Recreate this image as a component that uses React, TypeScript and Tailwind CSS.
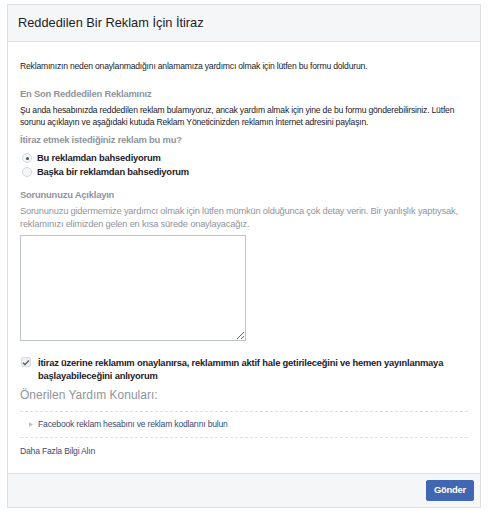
import React, { useState } from 'react';

const font = "font-['Liberation_Sans','Helvetica',Arial,sans-serif]";

export default function App() {
    const [choice, setChoice] = useState<'this' | 'other'>('this');
    const [agreed, setAgreed] = useState(true);

    return (
        <div className={`w-[491px] h-[516px] bg-white pt-[4px] pl-[7px] ${font}`}>
            <div className="w-[474px] border border-[#dddfe2] flex flex-col">
                {/* Header */}
                <div className="h-[37px] bg-[#f5f6f7] border-b border-[#dddfe2] flex items-center pl-[10px]">
                    <h2 className="text-[12.8px] text-[#1d2129]">Reddedilen Bir Reklam İçin İtiraz</h2>
                </div>

                {/* Body */}
                <div className="px-[12px] pt-[18px] h-[431px] tracking-[-0.2px]">
                    <p className="text-[8.6px] leading-[12px] text-[#1d2129]">
                        Reklamınızın neden onaylanmadığını anlamamıza yardımcı olmak için lütfen bu formu doldurun.
                    </p>

                    <div className="mt-[16px] text-[9.4px] leading-[12px] font-bold text-[#90949c]">En Son Reddedilen Reklamınız</div>
                    <p className="mt-[4px] text-[8.6px] leading-[12px] text-[#1d2129]">
                        Şu anda hesabınızda reddedilen reklam bulamıyoruz, ancak yardım almak için yine de bu formu gönderebilirsiniz. Lütfen sorunu açıklayın ve aşağıdaki kutuda Reklam Yöneticinizden reklamın İnternet adresini paylaşın.
                    </p>

                    <div className="mt-[6px] text-[9.4px] leading-[12px] font-bold text-[#90949c]">İtiraz etmek istediğiniz reklam bu mu?</div>
                    <div className="mt-[5px] flex flex-col">
                        {[
                            { id: 'this' as const, label: 'Bu reklamdan bahsediyorum' },
                            { id: 'other' as const, label: 'Başka bir reklamdan bahsediyorum' },
                        ].map((opt) => (
                            <label
                                key={opt.id}
                                onClick={() => setChoice(opt.id)}
                                className="flex items-center gap-[5px] h-[14px] pl-[2px] cursor-pointer"
                            >
                                <span className="w-[10px] h-[10px] rounded-full border border-[#d5d8de] bg-[#f5f6f7] flex items-center justify-center">
                                    {choice === opt.id && <span className="w-[3px] h-[3px] rounded-full bg-[#4b4f56]" />}
                                </span>
                                <span className="text-[9.4px] font-bold text-[#1d2129]">{opt.label}</span>
                            </label>
                        ))}
                    </div>

                    <div className="mt-[10px] text-[9.4px] leading-[12px] font-bold text-[#90949c]">Sorununuzu Açıklayın</div>
                    <p className="mt-[4px] text-[9.3px] leading-[13px] text-[#90949c]">
                        Sorununuzu gidermemize yardımcı olmak için lütfen mümkün olduğunca çok detay verin. Bir yanlışlık yaptıysak, reklamınızı elimizden gelen en kısa sürede onaylayacağız.
                    </p>
                    <textarea className="mt-[4px] block w-[226px] h-[106px] border border-[#bec3c9] resize-y outline-none p-[3px] text-[12px]" />

                    <label className="mt-[15px] flex items-start gap-[7px] pl-[1px] cursor-pointer" onClick={() => setAgreed(!agreed)}>
                        <span className="mt-[1px] w-[10px] h-[10px] shrink-0 rounded-[2px] border border-[#d5d8de] bg-[#f0f1f4] flex items-center justify-center">
                            {agreed && (
                                <svg width="8" height="7" viewBox="0 0 8 7">
                                    <path d="M1 3.8 L3 5.6 L7 1.4" fill="none" stroke="#4b4f56" strokeWidth="1.3" />
                                </svg>
                            )}
                        </span>
                        <span className="text-[9.4px] leading-[13px] font-bold text-[#1d2129]">
                            İtiraz üzerine reklamım onaylanırsa, reklamımın aktif hale getirileceğini ve hemen yayınlanmaya başlayabileceğini anlıyorum
                        </span>
                    </label>

                    <div className="mt-[6px] text-[12px] leading-[14px] tracking-normal text-[#90949c]">Önerilen Yardım Konuları:</div>

                    <div className="mt-[9px] border-t border-dashed border-[#dddfe2] border-b w-[448px]">
                        <div className="h-[25px] flex items-center pl-[9px] gap-[5px]">
                            <svg width="4" height="5" viewBox="0 0 4 5">
                                <path d="M0 0 L4 2.5 L0 5 Z" fill="#bec3c9" />
                            </svg>
                            <a className="text-[8.6px] text-[#3a4b78]">Facebook reklam hesabını ve reklam kodlarını bulun</a>
                        </div>
                    </div>

                    <a className="mt-[7px] block text-[8.6px] leading-[12px] text-[#3a4b78]">Daha Fazla Bilgi Alın</a>
                </div>

                {/* Footer */}
                <div className="h-[34px] bg-[#f5f6f7] border-t border-[#dddfe2] flex items-center justify-end pr-[6px]">
                    <button className="h-[21px] w-[48px] rounded-[2px] bg-[#4267b2] border border-[#4267b2] text-white text-[9.4px] tracking-[-0.2px] font-bold">
                        Gönder
                    </button>
                </div>
            </div>
        </div>
    );
}
